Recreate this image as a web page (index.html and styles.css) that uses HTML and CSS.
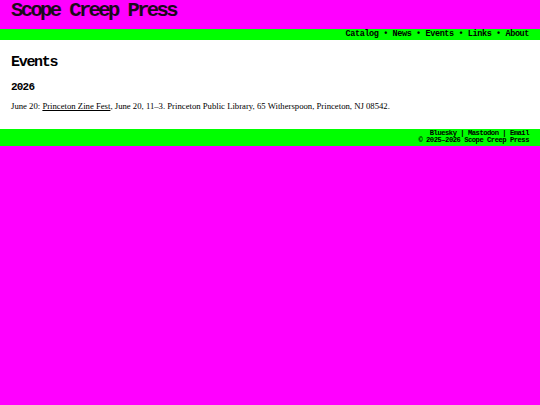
FILE: index.html
```html
<!DOCTYPE html>
<html lang="en">
<head>
  <meta charset="UTF-8">
  <meta name="viewport" content="width=device-width, initial-scale=1">
  <title>Events | Scope Creep Press</title>
  <link rel="stylesheet" href="styles.css">
</head>
<body>

<!-- Testata -->
<header class="masthead">
  <a class="site-title" href="index.html">Scope Creep Press</a>
</header>

<!-- Menu -->
<nav class="topnav">
  <a href="catalog.html">Catalog</a> &bull;
  <a href="news.html">News</a> &bull;
  <a href="events.html">Events</a> &bull;
  <a href="links.html">Links</a> &bull;
  <a href="about.html">About</a>
</nav>

<main class="content">
  <h1>Events</h1>
  <h2>2026</h2>
  <p>June 20: <a href="#">Princeton Zine Fest</a>, June 20, 11&ndash;3. Princeton Public Library, 65 Witherspoon, Princeton, NJ 08542.</p>
</main>

<footer class="footer">
  <div><a href="#">Bluesky</a> | <a href="#">Mastodon</a> | <a href="#">Email</a></div>
  <div>&copy; 2025&ndash;2026 Scope Creep Press</div>
</footer>

</body>
</html>
```

FILE: styles.css
```css
body {
  margin: 0;
  background-color: #ff00ff;
  color: #000;
  font-family: "Liberation Serif", serif;
}

/* Testata */
.masthead {
  height: 29px;
  padding: 0 11px;
  display: flex;
  align-items: flex-start;
}

.site-title {
  font-family: "Liberation Mono", monospace;
  font-weight: bold;
  font-size: 20.5px;
  line-height: 22px;
  letter-spacing: -2.6px;
  color: #1a0a1a;
  text-decoration: none;
}

/* Menu */
.topnav {
  background-color: #00ff00;
  height: 11px;
  line-height: 11px;
  padding: 0 11px;
  text-align: right;
  font-family: "Liberation Mono", monospace;
  font-weight: bold;
  font-size: 8.5px;
  letter-spacing: -0.4px;
}

.topnav a {
  color: #000;
  text-decoration: none;
}

/* Contenuto */
.content {
  background-color: #fff;
  padding: 14px 11px 18px;
}

.content h1 {
  margin: 0 0 10px;
  font-family: "Liberation Mono", monospace;
  font-size: 15px;
  letter-spacing: -1.3px;
}

.content h2 {
  margin: 0 0 8px;
  font-family: "Liberation Mono", monospace;
  font-size: 11px;
  letter-spacing: -0.8px;
}

.content p {
  margin: 0;
  font-size: 8.7px;
}

.content p a {
  color: #000;
}

/* Piede */
.footer {
  background-color: #00ff00;
  height: 16px;
  padding: 1px 11px 0;
  text-align: right;
  font-family: "Liberation Mono", monospace;
  font-weight: bold;
  font-size: 7.2px;
  line-height: 7px;
  letter-spacing: -0.5px;
}

.footer a {
  color: #000;
  text-decoration: none;
}
```
